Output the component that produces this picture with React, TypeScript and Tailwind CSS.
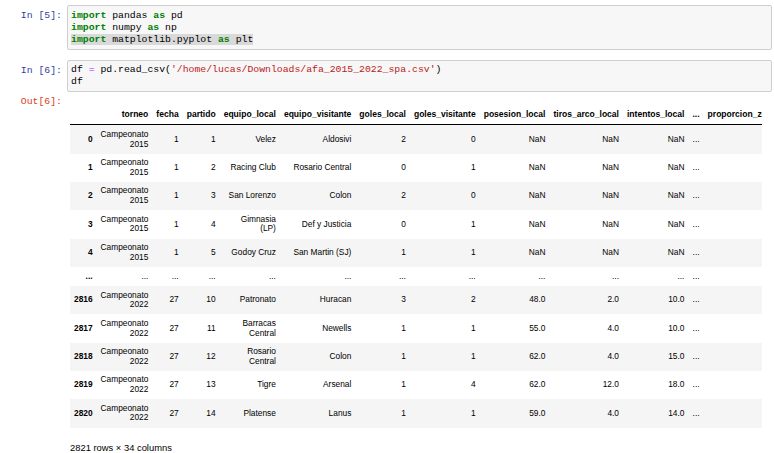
import React from "react";

type Row = { idx: string; cells: string[] };

const cols = [
  "torneo",
  "fecha",
  "partido",
  "equipo_local",
  "equipo_visitante",
  "goles_local",
  "goles_visitante",
  "posesion_local",
  "tiros_arco_local",
  "intentos_local",
  "...",
  "proporcion_zona_local",
];

const rows: Row[] = [
  { idx: "0", cells: ["Campeonato 2015", "1", "1", "Velez", "Aldosivi", "2", "0", "NaN", "NaN", "NaN", "...", "NaN"] },
  { idx: "1", cells: ["Campeonato 2015", "1", "2", "Racing Club", "Rosario Central", "0", "1", "NaN", "NaN", "NaN", "...", "NaN"] },
  { idx: "2", cells: ["Campeonato 2015", "1", "3", "San Lorenzo", "Colon", "2", "0", "NaN", "NaN", "NaN", "...", "NaN"] },
  { idx: "3", cells: ["Campeonato 2015", "1", "4", "Gimnasia (LP)", "Def y Justicia", "0", "1", "NaN", "NaN", "NaN", "...", "NaN"] },
  { idx: "4", cells: ["Campeonato 2015", "1", "5", "Godoy Cruz", "San Martin (SJ)", "1", "1", "NaN", "NaN", "NaN", "...", "NaN"] },
  { idx: "...", cells: ["...", "...", "...", "...", "...", "...", "...", "...", "...", "...", "...", "..."] },
  { idx: "2816", cells: ["Campeonato 2022", "27", "10", "Patronato", "Huracan", "3", "2", "48.0", "2.0", "10.0", "...", "0.5"] },
  { idx: "2817", cells: ["Campeonato 2022", "27", "11", "Barracas Central", "Newells", "1", "1", "55.0", "4.0", "10.0", "...", "0.5"] },
  { idx: "2818", cells: ["Campeonato 2022", "27", "12", "Rosario Central", "Colon", "1", "1", "62.0", "4.0", "15.0", "...", "0.5"] },
  { idx: "2819", cells: ["Campeonato 2022", "27", "13", "Tigre", "Arsenal", "1", "4", "62.0", "12.0", "18.0", "...", "0.5"] },
  { idx: "2820", cells: ["Campeonato 2022", "27", "14", "Platense", "Lanus", "1", "1", "59.0", "4.0", "14.0", "...", "0.5"] },
];

function K({ children }: { children: React.ReactNode }) {
  return <span className="font-bold text-[#008000]">{children}</span>;
}

export default function App() {
  return (
    <div className="w-[774px] h-[453px] overflow-hidden bg-white font-['Liberation_Mono',monospace] text-[9.8px] leading-[12px] text-black">
      {/* Cell 5 */}
      <div className="flex pt-[5px]">
        <div className="w-[67px] shrink-0 pt-[4.5px] pr-[5px] text-right text-[#303F9F]">In&nbsp;[5]:</div>
        <div className="mr-[2px] flex-1 rounded-[2px] border border-[#cfcfcf] bg-[#f7f7f7] px-[3px] py-[3.5px]">
          <div className="whitespace-pre">
            <K>import</K> pandas <K>as</K> pd
          </div>
          <div className="whitespace-pre">
            <K>import</K> numpy <K>as</K> np
          </div>
          <div className="whitespace-pre">
            <span className="bg-[#d9d9d9]">
              <K>import</K> matplotlib.pyplot <K>as</K> plt
            </span>
          </div>
        </div>
      </div>

      {/* Cell 6 */}
      <div className="mt-[10px] flex">
        <div className="w-[67px] shrink-0 pt-[4.5px] pr-[5px] text-right text-[#303F9F]">In&nbsp;[6]:</div>
        <div className="mr-[2px] flex-1 rounded-[2px] border border-[#cfcfcf] bg-[#f7f7f7] px-[3px] py-[3px]">
          <div className="whitespace-pre">
            df <span className="text-[#AA22FF]">=</span> pd.read_csv(
            <span className="text-[#BA2121]">'/home/lucas/Downloads/afa_2015_2022_spa.csv'</span>)
          </div>
          <div className="whitespace-pre">df</div>
        </div>
      </div>

      {/* Output */}
      <div className="flex pt-[4px]">
        <div className="w-[67px] shrink-0 pr-[5px] text-right text-[#D84315]">Out[6]:</div>
        <div className="ml-[3px] w-[692px] overflow-hidden font-['Liberation_Sans',Arial,sans-serif] text-black">
          <table className="mt-[10px] w-px border-collapse text-[8.35px] leading-[9.7px]">
            <thead>
              <tr className="border-b border-black">
                <th className="px-[4px] py-[4.4px]"></th>
                {cols.map((c, i) => (
                  <th key={i} className="whitespace-nowrap px-[4px] py-[4.4px] text-right align-middle text-[8.55px] font-bold">
                    {c}
                  </th>
                ))}
              </tr>
            </thead>
            <tbody>
              {rows.map((r, ri) => (
                <tr key={ri} className={ri % 2 === 0 ? "bg-[#f5f5f5]" : "bg-white"}>
                  <th className="px-[4px] py-[4.45px] text-right align-middle text-[8.35px] font-bold">{r.idx}</th>
                  {r.cells.map((c, ci) => (
                    <td key={ci} className={"px-[4px] text-right align-middle " + (r.idx === "..." ? "py-[4.8px]" : "py-[4.45px]")}>
                      {c}
                    </td>
                  ))}
                </tr>
              ))}
            </tbody>
          </table>
          <p className="mt-[14px] text-[9.4px] leading-[12px]">2821 rows × 34 columns</p>
        </div>
      </div>
    </div>
  );
}
